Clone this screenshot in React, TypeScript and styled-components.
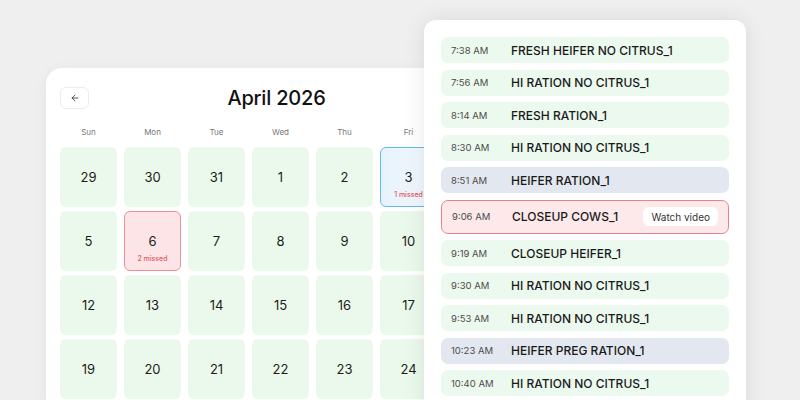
import React from 'react'
import styled, { createGlobalStyle, css } from 'styled-components'
import { ArrowLeft } from 'lucide-react'

const GlobalStyle = createGlobalStyle`
  html, body {
    margin: 0;
    padding: 0;
    background: #efefef;
    font-family: Inter, "Noto Sans", sans-serif;
    color: #1c1c1c;
  }
`

const Stage = styled.div`
  width: 800px;
  height: 400px;
  overflow: hidden;
  display: flex;
  align-items: flex-start;
  padding: 20px 0 0 46px;
  box-sizing: border-box;
`

const CalendarCard = styled.div`
  flex: none;
  width: 469px;
  margin-top: 48px;
  background: #fff;
  border-radius: 16px;
  padding: 18px 14px 20px;
  box-sizing: border-box;
  box-shadow: 0 2px 14px rgba(0, 0, 0, 0.05);
`

const Header = styled.div`
  display: grid;
  grid-template-columns: 1fr auto 1fr;
  align-items: center;
  height: 22px;
`

const BackButton = styled.button`
  width: 29px;
  height: 22px;
  border: 1px solid #ececec;
  border-radius: 6px;
  background: #fff;
  display: flex;
  align-items: center;
  justify-content: center;
  padding: 0;
  color: #333;
`

const Title = styled.h2`
  margin: 0 8px 0 0;
  font-size: 20px;
  font-weight: 500;
  letter-spacing: -0.2px;
  color: #111;
`

const Grid = styled.div`
  display: grid;
  grid-template-columns: repeat(7, 57px);
  column-gap: 7px;
  row-gap: 4px;
`

const WeekRow = styled(Grid)`
  margin-top: 19px;
  margin-bottom: 10px;
`

const WeekDay = styled.div`
  text-align: center;
  font-size: 8px;
  color: #777;
  line-height: 10px;
`

type Tone = 'plain' | 'missed' | 'today'

const Cell = styled.div<{ $tone: Tone }>`
  height: 60px;
  box-sizing: border-box;
  border-radius: 6px;
  background: #ebf9ed;
  display: flex;
  flex-direction: column;
  align-items: center;
  padding-top: 22px;
  ${({ $tone }) =>
    $tone === 'missed' &&
    css`
      background: #fde5e7;
      border: 1px solid #ee8f97;
      padding-top: 21px;
    `}
  ${({ $tone }) =>
    $tone === 'today' &&
    css`
      background: linear-gradient(90deg, #e6f2fb, #f4f9fd);
      border: 1px solid #63bde8;
      padding-top: 21px;
    `}
`

const DayNum = styled.span`
  font-size: 13px;
  line-height: 16px;
  color: #1c1c1c;
`

const Missed = styled.span`
  margin-top: 5px;
  font-size: 7px;
  line-height: 9px;
  color: #dd5865;
  font-weight: 500;
`

const Panel = styled.div`
  flex: none;
  position: relative;
  z-index: 1;
  width: 322px;
  height: 420px;
  margin-left: -91px;
  background: #fff;
  border-radius: 12px;
  padding: 17px 17px;
  box-sizing: border-box;
  box-shadow: 0 0 22px rgba(0, 0, 0, 0.09);
  display: flex;
  flex-direction: column;
  gap: 6.5px;
  overflow: hidden;
`

type RowTone = 'ok' | 'idle' | 'alert'

const Row = styled.div<{ $tone: RowTone }>`
  flex: none;
  display: grid;
  grid-template-columns: 60px 1fr auto;
  align-items: center;
  height: 26px;
  padding: 0 10px;
  border-radius: 7px;
  box-sizing: border-box;
  background: ${({ $tone }) => ($tone === 'idle' ? '#e3e7ef' : '#ecf9ee')};
  ${({ $tone }) =>
    $tone === 'alert' &&
    css`
      height: 34px;
      background: #fde8ea;
      border: 1px solid #e8838d;
    `}
`

const Time = styled.span`
  font-size: 9.5px;
  color: #4c4c4c;
`

const Name = styled.span`
  font-size: 12px;
  font-weight: 500;
  color: #1a1a1a;
`

const WatchButton = styled.button`
  height: 19px;
  padding: 0 8px;
  border: none;
  border-radius: 6px;
  background: #fff;
  font-family: inherit;
  font-size: 10px;
  color: #333;
`

const weekDays = ['Sun', 'Mon', 'Tue', 'Wed', 'Thu', 'Fri', 'Sat']

const days: { n: number; tone?: Tone; missed?: string }[] = [
  { n: 29 }, { n: 30 }, { n: 31 }, { n: 1 }, { n: 2 }, { n: 3, tone: 'today', missed: '1 missed' }, { n: 4 },
  { n: 5 }, { n: 6, tone: 'missed', missed: '2 missed' }, { n: 7 }, { n: 8 }, { n: 9 }, { n: 10 }, { n: 11 },
  { n: 12 }, { n: 13 }, { n: 14 }, { n: 15 }, { n: 16 }, { n: 17 }, { n: 18 },
  { n: 19 }, { n: 20 }, { n: 21 }, { n: 22 }, { n: 23 }, { n: 24 }, { n: 25 },
]

const feedings: { time: string; name: string; tone: RowTone }[] = [
  { time: '7:38 AM', name: 'FRESH HEIFER NO CITRUS_1', tone: 'ok' },
  { time: '7:56 AM', name: 'HI RATION NO CITRUS_1', tone: 'ok' },
  { time: '8:14 AM', name: 'FRESH RATION_1', tone: 'ok' },
  { time: '8:30 AM', name: 'HI RATION NO CITRUS_1', tone: 'ok' },
  { time: '8:51 AM', name: 'HEIFER RATION_1', tone: 'idle' },
  { time: '9:06 AM', name: 'CLOSEUP COWS_1', tone: 'alert' },
  { time: '9:19 AM', name: 'CLOSEUP HEIFER_1', tone: 'ok' },
  { time: '9:30 AM', name: 'HI RATION NO CITRUS_1', tone: 'ok' },
  { time: '9:53 AM', name: 'HI RATION NO CITRUS_1', tone: 'ok' },
  { time: '10:23 AM', name: 'HEIFER PREG RATION_1', tone: 'idle' },
  { time: '10:40 AM', name: 'HI RATION NO CITRUS_1', tone: 'ok' },
]

const App = () => {
  return (
    <>
      <GlobalStyle />
      <Stage>
        <CalendarCard>
          <Header>
            <div>
              <BackButton aria-label="Previous month">
                <ArrowLeft size={10} strokeWidth={2} />
              </BackButton>
            </div>
            <Title>April 2026</Title>
            <div />
          </Header>
          <WeekRow>
            {weekDays.map((d) => (
              <WeekDay key={d}>{d}</WeekDay>
            ))}
          </WeekRow>
          <Grid>
            {days.map((d, i) => (
              <Cell key={i} $tone={d.tone || 'plain'}>
                <DayNum>{d.n}</DayNum>
                {d.missed && <Missed>{d.missed}</Missed>}
              </Cell>
            ))}
          </Grid>
        </CalendarCard>

        <Panel>
          {feedings.map((f, i) => (
            <Row key={i} $tone={f.tone}>
              <Time>{f.time}</Time>
              <Name>{f.name}</Name>
              {f.tone === 'alert' ? <WatchButton>Watch video</WatchButton> : <span />}
            </Row>
          ))}
        </Panel>
      </Stage>
    </>
  )
}

export default App
